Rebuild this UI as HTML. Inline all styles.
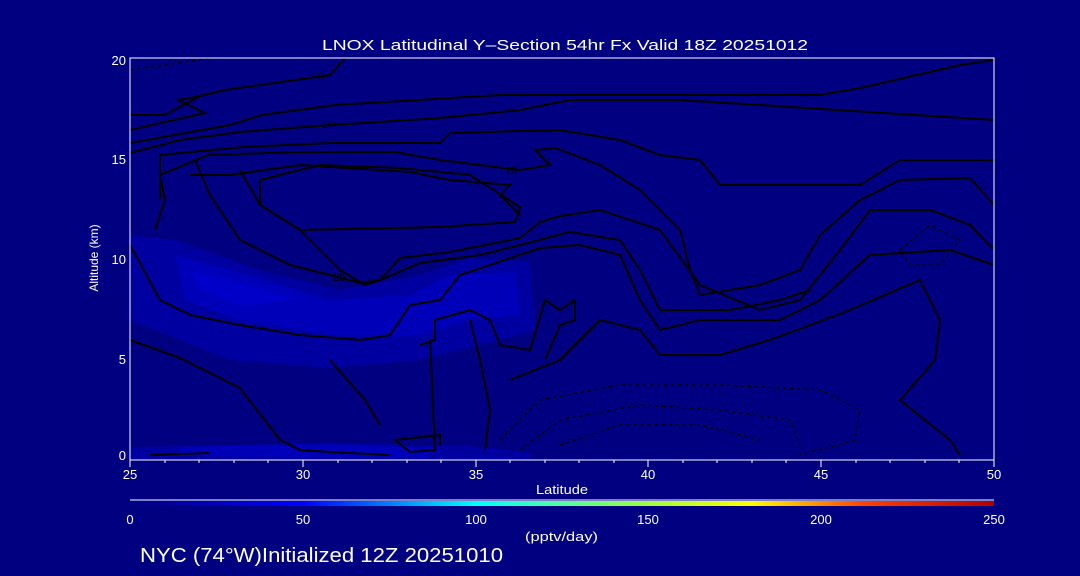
<!DOCTYPE html>
<html><head><meta charset="utf-8"><style>
html,body{margin:0;padding:0;background:#000080;width:1080px;height:576px;overflow:hidden}
svg{display:block}
text{font-family:"Liberation Sans",sans-serif;fill:#fff}
</style></head><body>
<svg width="1080" height="576" viewBox="0 0 1080 576">
<defs>
<linearGradient id="cb" x1="0" x2="1" y1="0" y2="0">
<stop offset="0" stop-color="#000080"/>
<stop offset="0.2" stop-color="#0000ff"/>
<stop offset="0.4" stop-color="#00ffff"/>
<stop offset="0.6" stop-color="#a0ff40"/>
<stop offset="0.72" stop-color="#ffff00"/>
<stop offset="0.85" stop-color="#ff4000"/>
<stop offset="1" stop-color="#b00000"/>
</linearGradient>
</defs>
<rect width="1080" height="576" fill="#000080"/>
<path d="M130 235 L175 240 L260 270 L340 290 L420 275 L470 258 L530 262 L535 330 L480 345 L420 360 L330 368 L230 360 L130 320Z" fill="#0000a0"/>
<path d="M175 255 L250 275 L330 300 L410 295 L450 275 L515 272 L520 315 L470 320 L420 335 L330 335 L240 320 L185 300Z" fill="#0000b8"/>
<path d="M190 270 L250 285 L300 300 L240 305 L200 290Z" fill="#0000c8"/>
<path d="M130 447 L330 443 L470 446 L530 452 L530 460 L130 460Z" fill="#0000a0"/>
<path d="M180 447 L330 444 L430 448 L430 458 L180 456Z" fill="#0000b8"/>
<g fill="none" stroke="#000" stroke-width="2">
<path d="M130 115 L165 115 L200 96 L225 90 L330 75 L345 58"/>
<path d="M130 130 L205 113 L178 100 L200 96"/>
<path d="M130 143 L230 125 L262 115 L335 105 L500 95 L820 95 L860 88 L960 65 L994 60"/>
<path d="M130 153 L180 140 L240 132 L330 125 L440 118 L520 110 L570 100 L680 100 L760 105 L994 120"/>
<path d="M160 200 L160 155 L243 147 L330 143 L440 143 L450 133 L560 130 L620 140 L660 155 L700 160 L720 185 L860 185 L900 160 L994 160"/>
<path d="M155 230 L165 200 L160 175 L208 155 L300 152 L395 152 L440 160 L520 170 L550 165 L535 150 L555 148 L600 165 L640 190 L680 230 L690 270 L700 295 L760 285 L800 270 L820 235 L860 200 L900 180 L970 178 L994 205"/>
<path d="M190 175 L230 175 L300 165 L410 172 L450 180 L510 185 L500 195 L520 215"/>
<path d="M260 180 L320 165 L400 168 L470 175 L520 207 L515 222 L440 227 L300 230 L260 205Z"/>
<path d="M240 170 L260 205 L300 230 L340 270 L365 285 L380 280 L400 258 L450 252 L520 238 L540 222 L560 216 L600 210 L660 230 L700 285 L760 310 L800 300 L840 250 L870 210 L930 210 L970 225 L994 250"/>
<path d="M195 160 L210 195 L240 240 L290 265 L330 275 L360 283 L380 280 L420 263 L480 255 L520 245 L570 232 L620 240 L640 270 L660 310 L730 310 L780 300 L810 290"/>
<path d="M130 245 L160 300 L190 315 L240 325 L300 335 L360 340 L390 335 L410 305 L440 300 L460 275 L490 265 L540 248 L580 245 L620 255 L640 300 L660 330 L700 320 L780 320 L820 300 L870 255 L950 250 L994 265"/>
<path d="M130 340 L180 358 L240 388 L280 440 L300 450 L330 452 L390 455"/>
<path d="M330 360 L365 400 L380 425"/>
<path d="M420 345 L435 340 L435 320 L470 310 L490 320 L500 345 L530 350 L545 300 L560 310 L575 300 L575 320 L560 325 L545 360"/>
<path d="M470 320 L480 360 L490 410 L485 450"/>
<path d="M430 340 L435 450 L410 452 L395 440 L440 435 L440 445"/>
<path d="M510 380 L560 360 L600 320 L640 330 L660 355 L720 355 L770 340 L850 310 L920 280 L940 320 L935 360 L900 400 L950 440 L960 455"/>
<path d="M150 455 L210 453"/>
</g>
<g fill="none" stroke="#000" stroke-width="1.5" stroke-dasharray="3 4">
<path d="M500 440 L540 400 L620 385 L720 385 L820 390 L860 410 L855 440 L800 455"/>
<path d="M520 450 L560 420 L640 405 L720 410 L790 420 L800 445"/>
<path d="M560 445 L620 425 L700 425 L760 440"/>
<path d="M130 70 L210 58"/>
<path d="M900 250 L930 225 L960 240 L940 265 L910 265Z"/>
</g>
<g font-size="11" fill="#000" style="fill:#000">
<text x="318" y="80" style="fill:#000">0</text>
<text x="322" y="128" style="fill:#000">10</text>
<text x="505" y="174" style="fill:#000">10</text>
<text x="333" y="281" style="fill:#000">20</text>
</g>
<rect x="130" y="58" width="864" height="402" fill="none" stroke="#fff" stroke-width="1"/>
<g stroke="#fff" stroke-width="1">
<path d="M130 460V467M303 460V467M476 460V467M648 460V467M821 460V467M994 460V467"/>
<path d="M165 460V463M199 460V463M234 460V463M268 460V463M338 460V463M372 460V463M407 460V463M441 460V463M510 460V463M545 460V463M579 460V463M614 460V463M683 460V463M717 460V463M752 460V463M786 460V463M856 460V463M890 460V463M925 460V463M959 460V463"/>
</g>
<line x1="130" y1="500" x2="994" y2="500" stroke="#fff"/>
<rect x="130" y="501" width="864" height="5" fill="url(#cb)"/>
<g font-size="13">
<text x="322" y="50" font-size="15" textLength="486" lengthAdjust="spacingAndGlyphs">LNOX Latitudinal Y–Section 54hr  Fx Valid 18Z 20251012</text>
<text x="126" y="65" text-anchor="end">20</text>
<text x="126" y="164" text-anchor="end">15</text>
<text x="126" y="264" text-anchor="end">10</text>
<text x="126" y="364" text-anchor="end">5</text>
<text x="126" y="460" text-anchor="end">0</text>
<text x="130" y="479" text-anchor="middle">25</text>
<text x="303" y="479" text-anchor="middle">30</text>
<text x="476" y="479" text-anchor="middle">35</text>
<text x="648" y="479" text-anchor="middle">40</text>
<text x="821" y="479" text-anchor="middle">45</text>
<text x="994" y="479" text-anchor="middle">50</text>
<text x="536" y="494" textLength="52" lengthAdjust="spacingAndGlyphs">Latitude</text>
<text x="130" y="524" text-anchor="middle">0</text>
<text x="303" y="524" text-anchor="middle">50</text>
<text x="476" y="524" text-anchor="middle">100</text>
<text x="648" y="524" text-anchor="middle">150</text>
<text x="821" y="524" text-anchor="middle">200</text>
<text x="994" y="524" text-anchor="middle">250</text>
<text x="525" y="541" textLength="73" lengthAdjust="spacingAndGlyphs">(pptv/day)</text>
<text x="0" y="0" transform="translate(98,258) rotate(-90)" text-anchor="middle" font-size="12">Altitude (km)</text>
<text x="140" y="562" font-size="20" textLength="363" lengthAdjust="spacingAndGlyphs">NYC (74°W)Initialized 12Z 20251010</text>
</g>
</svg>
</body></html>
